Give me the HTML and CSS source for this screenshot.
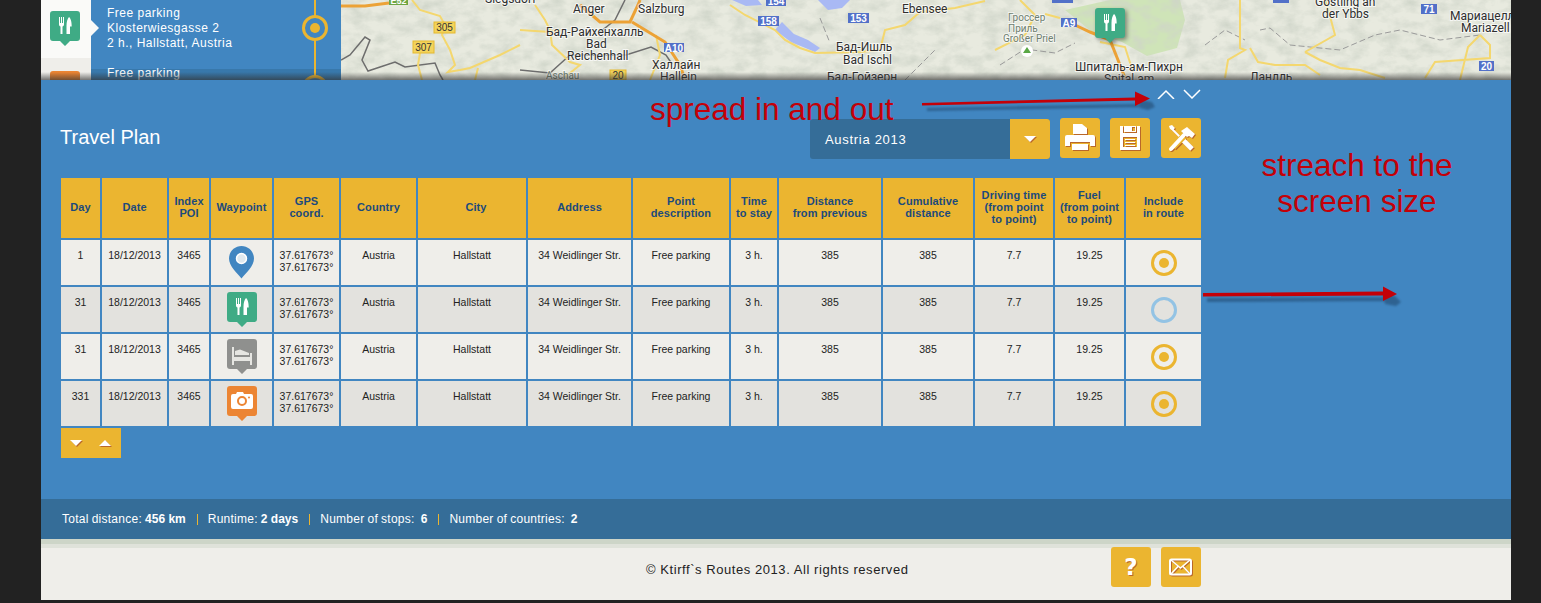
FILE: index.html
```html
<!DOCTYPE html>
<html>

<head>
    <meta charset="utf-8" />
    <title>Travel Plan</title>
    <link rel="stylesheet" href="styles.css">
</head>

<body>
    <svg class="defs" width="0" height="0">
        <defs>
            <filter id="terrain" x="0" y="0" width="100%" height="100%">
                <feTurbulence type="fractalNoise" baseFrequency="0.06 0.09" numOctaves="5" seed="11" />
                <feColorMatrix type="matrix" values="0 0 0 0 0.62  0 0 0 0 0.66  0 0 0 0 0.58  1.7 0 0 0 -0.62" />
            </filter>
            <symbol id="pin-body" viewBox="0 0 30 35">
                <path d="M3 0h24a3 3 0 0 1 3 3v24a3 3 0 0 1-3 3h-7l-5 5-5-5H3a3 3 0 0 1-3-3V3a3 3 0 0 1 3-3z" />
            </symbol>
            <symbol id="i-food" viewBox="0 0 30 35">
                <path fill="#fff" d="M9 6h1v6h1V6h1v6h1V6h1v7.5c0 1-.7 1.7-1.5 1.9V23h-2v-7.6C9.7 15.2 9 14.5 9 13.5z" />
                <path fill="#fff" d="M19 6c1.6 1 2.7 4.5 2.7 9.5H20V23h-3.5V15c0-4 1-7.5 2.5-9z" />
            </symbol>
            <symbol id="i-bed" viewBox="0 0 30 35">
                <path fill="#e6e6e2" d="M5 8h2v10h16v-4h2v12h-2v-4H7v4H5z" />
                <path fill="#e6e6e2" d="M8 12l5-1.5 9 3.5v2H8z" />
            </symbol>
            <symbol id="i-camera" viewBox="0 0 30 35">
                <path fill="#fff" fill-rule="evenodd" d="M9 8l1-2h6l1 2h7a2 2 0 0 1 2 2v11a2 2 0 0 1-2 2H6a2 2 0 0 1-2-2V10a2 2 0 0 1 2-2zM15 10a5 5 0 1 0 0 10 5 5 0 0 0 0-10zM15 12a3 3 0 1 1 0 6 3 3 0 0 1 0-6zM22 10.5a1 1 0 1 0 0 2 1 1 0 0 0 0-2z" />
            </symbol>
        </defs>
    </svg>

    <section class="page">
        <section class="top">
            <aside class="stops">
                <div class="stop stop-active">
                    <div class="stop-icon">
                        <svg class="pin pin-green"><use href="#pin-body" /></svg>
                        <svg class="pin pin-glyph"><use href="#i-food" /></svg>
                    </div>
                    <div class="stop-text">
                        Free parking<br />Klosterwiesgasse 2<br />2 h., Hallstatt, Austria
                    </div>
                    <div class="stop-mark"><span class="ring"><span class="dot"></span></span></div>
                </div>
                <div class="stop">
                    <div class="stop-icon">
                        <svg class="pin pin-orange"><use href="#pin-body" /></svg>
                    </div>
                    <div class="stop-text">Free parking</div>
                    <div class="stop-mark"><span class="ring"><span class="dot"></span></span></div>
                </div>
            </aside>

            <svg class="map" viewBox="341 0 1170 80" preserveAspectRatio="none">
                <rect x="341" y="0" width="1170" height="80" fill="#e8eadf" />
                <path d="M1065 10 1110 0h70l5 20-8 28-30 8-25-14-30-10z" fill="#cfe4b8" />
                <rect x="341" y="0" width="1170" height="80" filter="url(#terrain)" />
                <path class="lake" d="M732 0l14 6 16-1-4-5zM818 0l10 10 14-2 8-8zM775 30l16 12 24 10 5-4-12-8-14-6-12-12z" />
                <g class="border">
                    <path d="M341 60l9-5 15-18 5 3-8 20 6 11 27-9 10 5 30-4 5 12 3 5" />
                    <path d="M520 70l30 3 20-18h56l25-8 15 8 6 9" />
                    <path d="M600 32l15-12 10-20" />
                </g>
                <g class="border-dash">
                    <path d="M820 18l10 25M905 80l30-30M1000 65l25-16 30 4 20-10" />
                    <path d="M1260 30l10-2 20 17 50 5 35-15 25-5 40 10 40-5" />
                    <path d="M1205 45l20-15 20 10" />
                </g>
                <g class="road">
                    <path d="M412 0l8 10 20 6 5 9-3 10 8 15 5 15-7 7 12-2 10-2 30-13 20-10" />
                    <path d="M420 53l-2 12 4 15M475 80l3-12M520 30l30 2 10-2M535 5l10 15 5 10 2 15 18 17 10 3-15 12" />
                    <path d="M656 35l4 20-6 15-4 10M730 5l15 10 30 15 10 10 15 8 15 5 45-1 20-2 5-20 20-5 15-13 35-4 30-7" />
                    <path d="M1240 0v48l5 2-17 10-3 18M1250 48l8 14 17 3h30l15 10M1305 52l30-17-4-15-6-20" />
                    <path d="M1305 52l15 8 20 8 20 2 25 8M1480 35l10 10v13l-55 4-10 16M1480 35l-12 12-8 33M1100 42l25 5 8 25" />
                    <path d="M1045 14l15 4M1020 0l15 15-10 20-30 15" />
                </g>
                <g class="motorway">
                    <path d="M341 6h24l24-3M580 5l20 17h30l8-17 2-5M632 22l33 20 15 23 5 15" />
                    <path d="M1075 25l15 7 20 8 8 20 7 18" />
                </g>

                <g class="badge-y">
                    <rect x="434" y="22" width="21" height="11" /><text x="444.5" y="31">305</text>
                    <rect x="413" y="41" width="21" height="12" /><text x="423.5" y="51">307</text>
                    <rect x="610" y="70" width="16" height="10" /><text x="618" y="79">20</text>
                </g>
                <g class="badge-b">
                    <rect x="766" y="-4" width="20" height="10" /><text x="776" y="5">154</text>
                    <rect x="758" y="16" width="21" height="10" /><text x="768.5" y="25">158</text>
                    <rect x="848" y="13" width="21" height="10" /><text x="858.5" y="22">153</text>
                    <rect x="664" y="43" width="20" height="9" /><text x="674" y="51.5">A10</text>
                    <rect x="1061" y="18" width="16" height="9" /><text x="1069" y="26.5">A9</text>
                    <rect x="1421" y="4" width="16" height="10" /><text x="1429" y="13">71</text>
                    <rect x="1479" y="61" width="15" height="10" /><text x="1486.5" y="70">20</text>
                    <rect x="1052" y="-5" width="21" height="8" />
                    <rect x="1273" y="-5" width="16" height="8" />
                </g>
                <rect class="badge-g" x="389" y="-4" width="19" height="9" />
                <text class="badge-g-text" x="398.5" y="4">E52</text>

                <g class="label">
                    <text x="485" y="3">Siegsdorf</text>
                    <text x="573" y="13">Anger</text>
                    <text x="638" y="13">Salzburg</text>
                    <text x="902" y="13">Ebensee</text>
                    <text x="546" y="36">Бад-Райхенхалль</text>
                    <text x="586" y="48">Bad</text>
                    <text x="567" y="60">Reichenhall</text>
                    <text x="652" y="69">Халлайн</text>
                    <text x="660" y="81">Hallein</text>
                    <text x="836" y="51">Бад-Ишль</text>
                    <text x="843" y="64">Bad Ischl</text>
                    <text x="827" y="81">Бад-Гойзерн</text>
                    <text x="1075" y="71">Шпиталь-ам-Пихрн</text>
                    <text x="1104" y="83">Spital am</text>
                    <text x="1315" y="6">Gostling an</text>
                    <text x="1322" y="18">der Ybbs</text>
                    <text x="1450" y="20">Мариацелль</text>
                    <text x="1461" y="32">Mariazell</text>
                    <text x="1250" y="81">Ланлль</text>
                </g>
                <g class="label-small">
                    <text x="546" y="79">Aschau</text>
                    <text x="1008" y="21">Гроссер</text>
                    <text x="1008" y="32">Приль</text>
                    <text x="1003" y="42">Großer Priel</text>
                </g>
                <circle cx="1027" cy="51" r="6" fill="#fff" />
                <path d="M1027 47l4 6h-8z" fill="#5aa845" />

                <svg class="map-pin" x="1095" y="8" width="30" height="35"><use href="#pin-body" /></svg>
                <svg x="1095" y="8" width="30" height="35"><use href="#i-food" /></svg>
            </svg>
            <div class="top-fade"></div>
        </section>

        <section class="panel">
            <div class="spread">
                <svg class="chevron" viewBox="0 0 18 10"><path d="M1 10l8-8 8 8" /></svg>
                <svg class="chevron" viewBox="0 0 18 10"><path d="M1 1l8 8 8-8" /></svg>
            </div>
            <div class="toolbar">
                <h1>Travel Plan</h1>
                <div class="picker">
                    <span class="picker-value">Austria 2013</span>
                    <span class="picker-btn"><span class="tri-down"></span></span>
                </div>
                <button class="tool">
                    <svg viewBox="0 0 40 40">
                        <path fill="#fff" d="M13 6h9l5 4v6H13z" />
                        <path fill="#fff" d="M7 17h26a2 2 0 0 1 2 2v9h-5v-4H10v4H5v-9a2 2 0 0 1 2-2z" />
                        <path fill="#fff" d="M12 26h16v6H12z" />
                    </svg>
                </button>
                <button class="tool">
                    <svg viewBox="0 0 40 40">
                        <path fill="#fff" fill-rule="evenodd" d="M10 8h3v7h14V8h3v24H10zM14 8h12v6H14zM22 9v4h3V9zM13 19v10h14V19z" />
                        <path fill="#fff" d="M15 21h10v1H15zM15 24h10v1H15zM15 27h10v1H15z" />
                    </svg>
                </button>
                <button class="tool">
                    <svg viewBox="0 0 40 40">
                        <path fill="none" stroke="#fff" stroke-width="2" d="M10 10l12 12" />
                        <path fill="#fff" d="M8 8l3-1 3 3-2 2-3-1z" />
                        <path fill="none" stroke="#fff" stroke-width="5" d="M22 22l9 9" />
                        <path fill="none" stroke="#ebb530" stroke-width="6.5" d="M12 29l11-11" />
                        <path fill="none" stroke="#fff" stroke-width="4" stroke-linecap="round" d="M10 31l13-14" />
                        <path fill="#fff" d="M20 13l6-4 8 7-3 4-3-2-2 1z" />
                    </svg>
                </button>
            </div>

            <table class="plan">
                <colgroup>
                    <col class="c1"><col class="c2"><col class="c3"><col class="c4"><col class="c5">
                    <col class="c6"><col class="c7"><col class="c8"><col class="c9"><col class="c10">
                    <col class="c11"><col class="c12"><col class="c13"><col class="c14"><col class="c15">
                </colgroup>
                <thead>
                    <tr>
                        <th>Day</th><th>Date</th><th>Index<br />POI</th><th>Waypoint</th><th>GPS<br />coord.</th>
                        <th>Country</th><th class="th-city">City</th><th>Address</th><th>Point<br />description</th><th>Time<br />to stay</th>
                        <th>Distance<br />from previous</th><th>Cumulative<br />distance</th>
                        <th>Driving time<br />(from point<br />to point)</th><th>Fuel<br />(from point<br />to point)</th>
                        <th>Include<br />in route</th>
                    </tr>
                </thead>
                <tbody>
                    <tr>
                        <td>1</td><td>18/12/2013</td><td>3465</td>
                        <td class="way">
                            <svg class="map-marker" viewBox="0 0 25 33">
                                <path d="M12.5 0C5.6 0 0 5.6 0 12.5 0 20 8 27 12.5 32.5 17 27 25 20 25 12.5 25 5.6 19.4 0 12.5 0z" />
                                <circle cx="12.5" cy="12.5" r="5" fill="#dfe9ef" stroke="#fff" stroke-width="1.5" />
                            </svg>
                        </td>
                        <td>37.617673°<br />37.617673°</td><td>Austria</td><td>Hallstatt</td><td>34 Weidlinger Str.</td>
                        <td>Free parking</td><td>3 h.</td><td>385</td><td>385</td><td>7.7</td><td>19.25</td>
                        <td class="inc"><span class="ring"><span class="dot"></span></span></td>
                    </tr>
                    <tr>
                        <td>31</td><td>18/12/2013</td><td>3465</td>
                        <td class="way">
                            <span class="way-pin">
                                <svg class="pin pin-green"><use href="#pin-body" /></svg>
                                <svg class="pin pin-glyph"><use href="#i-food" /></svg>
                            </span>
                        </td>
                        <td>37.617673°<br />37.617673°</td><td>Austria</td><td>Hallstatt</td><td>34 Weidlinger Str.</td>
                        <td>Free parking</td><td>3 h.</td><td>385</td><td>385</td><td>7.7</td><td>19.25</td>
                        <td class="inc"><span class="ring ring-off"></span></td>
                    </tr>
                    <tr>
                        <td>31</td><td>18/12/2013</td><td>3465</td>
                        <td class="way">
                            <span class="way-pin">
                                <svg class="pin pin-grey"><use href="#pin-body" /></svg>
                                <svg class="pin pin-glyph"><use href="#i-bed" /></svg>
                            </span>
                        </td>
                        <td>37.617673°<br />37.617673°</td><td>Austria</td><td>Hallstatt</td><td>34 Weidlinger Str.</td>
                        <td>Free parking</td><td>3 h.</td><td>385</td><td>385</td><td>7.7</td><td>19.25</td>
                        <td class="inc"><span class="ring"><span class="dot"></span></span></td>
                    </tr>
                    <tr>
                        <td>331</td><td>18/12/2013</td><td>3465</td>
                        <td class="way">
                            <span class="way-pin">
                                <svg class="pin pin-orange"><use href="#pin-body" /></svg>
                                <svg class="pin pin-glyph"><use href="#i-camera" /></svg>
                            </span>
                        </td>
                        <td>37.617673°<br />37.617673°</td><td>Austria</td><td>Hallstatt</td><td>34 Weidlinger Str.</td>
                        <td>Free parking</td><td>3 h.</td><td>385</td><td>385</td><td>7.7</td><td>19.25</td>
                        <td class="inc"><span class="ring"><span class="dot"></span></span></td>
                    </tr>
                </tbody>
            </table>

            <div class="sorter">
                <span class="tri-down"></span>
                <span class="tri-up"></span>
            </div>

            <!-- annotations drawn on top of the screen -->
            <div class="note note-spread">spread in and out</div>
            <div class="note note-stretch">streach to the<br />screen size</div>
            <svg class="arrows" viewBox="0 0 1470 420">
                <path class="arrow-shadow" d="M886 28l210-4 3 3-213 4zM1096 19l15 3 3 5-7 3-8-2zM1166 218l185-1 4 4-189 1zM1342 214l12 2 6 6-5 4-11-2z" />
                <path class="arrow-line" d="M881 23l213-5.5v-6l15 7-15 7.5v-5.5l-213 5zM1162 213l180-1.5v-5l14 7.5-14 7v-5.5l-180 1z" />
            </svg>
        </section>

        <section class="totals">
            <span>Total distance: <b>456 km</b></span><i></i>
            <span>Runtime: <b>2 days</b></span><i></i>
            <span>Number of stops: <b class="wide">6</b></span><i></i>
            <span>Number of countries: <b class="wide">2</b></span>
        </section>

        <footer class="foot">
            <div class="copy">© Ktirff`s Routes 2013. All rights reserved</div>
            <div class="foot-btns">
                <button class="tool tool-help">?</button>
                <button class="tool">
                    <svg viewBox="0 0 40 40">
                        <rect x="9" y="12.5" width="21" height="15" rx="1.5" fill="none" stroke="#fff" stroke-width="2" />
                        <path d="M10 13l9.5 8 9.5-8M10 27l7-7.5M29 27l-7-7.5" fill="none" stroke="#fff" stroke-width="1.5" />
                    </svg>
                </button>
            </div>
        </footer>
    </section>
</body>

</html>
```

FILE: styles.css
```css
* {
    padding: 0;
    margin: 0;
    box-sizing: border-box;
}

body {
    background-color: #222222;
    font-family: "Liberation Sans", Arial, sans-serif;
    overflow: hidden;
}

.defs {
    position: absolute;
}

.page {
    width: 1470px;
    height: 600px;
    margin-left: 41px;
    background-color: #efeeea;
    display: flex;
    flex-direction: column;
}

/* top strip: stop list and map */
.top {
    position: relative;
    display: flex;
    height: 80px;
    overflow: hidden;
    flex-shrink: 0;
}

.stops {
    position: relative;
    width: 300px;
    flex-shrink: 0;
    background: linear-gradient(#4186c1, #4186c1) no-repeat 0 0 / 100% 69px, #3878ab;
}

.stop {
    display: flex;
    height: 60px;
}

.stop-icon {
    position: relative;
    width: 50px;
    height: 60px;
    padding: 13px 0 0 9px;
    background-color: #efeeea;
    margin-top: -2px;
}

.stop-active .stop-icon {
    background-color: #fafaf8;
}

.stop-active .stop-icon::after {
    content: "";
    position: absolute;
    left: 50px;
    top: 22px;
    border-left: 8px solid #fafaf8;
    border-top: 8px solid transparent;
    border-bottom: 8px solid transparent;
}

.stop-text {
    width: 208px;
    padding: 6px 0 0 16px;
    color: #ffffff;
    font-size: 12px;
    line-height: 15px;
    letter-spacing: 0.5px;
}

.stop-mark {
    width: 28px;
    margin-left: 2px;
    padding: 15px 0 0 1px;
    flex-shrink: 0;
    background: linear-gradient(#ebb530, #ebb530) no-repeat 13px 0 / 2px 100%;
}

.map {
    display: block;
    width: 1170px;
    height: 80px;
}

.lake {
    fill: #a9b9f4;
}

.border path {
    fill: none;
    stroke: #6d6d6d;
    stroke-width: 1.5;
}

.border-dash path {
    fill: none;
    stroke: #9a9a9a;
    stroke-width: 1;
    stroke-dasharray: 6 3;
}

.road path {
    fill: none;
    stroke: #f4d76e;
    stroke-width: 2;
}

.motorway path {
    fill: none;
    stroke: #eca236;
    stroke-width: 3;
}

.badge-y rect {
    fill: #f2d35c;
    stroke: #e6b92e;
}

.badge-y text {
    font: 10px "Liberation Sans", sans-serif;
    fill: #333333;
    text-anchor: middle;
}

.badge-b rect {
    fill: #5270c8;
}

.badge-b text {
    font: bold 10px "Liberation Sans", sans-serif;
    fill: #ffffff;
    text-anchor: middle;
}

.badge-g {
    fill: #6ea544;
}

.badge-g-text {
    font: bold 9px "Liberation Sans", sans-serif;
    fill: #ffffff;
    text-anchor: middle;
}

.label text {
    font: 12px Roboto, sans-serif;
    fill: #2e2e2e;
    stroke: rgba(255, 255, 255, 0.7);
    stroke-width: 2px;
    paint-order: stroke;
}

.label-small text {
    font: 10px Roboto, sans-serif;
    fill: #6f7f70;
    stroke: rgba(255, 255, 255, 0.6);
    stroke-width: 2px;
    paint-order: stroke;
}

.map-pin {
    fill: #3fab85;
    filter: drop-shadow(2px 2px 2px rgba(0, 0, 0, 0.4));
}

.top-fade {
    position: absolute;
    left: 0;
    right: 0;
    bottom: 0;
    height: 8px;
    background: linear-gradient(rgba(50, 50, 50, 0), rgba(50, 50, 50, 0.65));
}

/* pins */
.pin {
    display: block;
    width: 30px;
    height: 35px;
}

.pin-glyph {
    position: absolute;
    left: 9px;
    top: 13px;
}

.pin-green {
    fill: #3fab85;
}

.pin-orange {
    fill: #ec8533;
}

.pin-grey {
    fill: #8f908e;
}

.way-pin .pin-glyph {
    left: 0;
    top: 0;
}

.way-pin {
    position: relative;
    display: block;
    width: 30px;
    height: 35px;
    margin: 5px auto 0;
}

.map-marker {
    display: block;
    width: 25px;
    height: 33px;
    margin: 6px auto 0;
    fill: #4186c1;
}

/* ring used in timeline and table */
.ring {
    display: flex;
    align-items: center;
    justify-content: center;
    width: 26px;
    height: 26px;
    border: 3px solid #ebb530;
    border-radius: 50%;
}

.stop-mark .ring {
    background-color: #4186c1;
}

.ring-off {
    border-color: #93c3e4;
}

.dot {
    display: block;
    width: 10px;
    height: 10px;
    border-radius: 50%;
    background-color: #ebb530;
}

/* main blue panel */
.panel {
    position: relative;
    height: 419px;
    flex-shrink: 0;
    padding: 9px 0 0 20px;
    background-color: #4186c1;
}

.spread {
    display: flex;
    justify-content: flex-end;
    gap: 8px;
    width: 1140px;
    height: 10px;
}

.chevron {
    display: block;
    width: 18px;
    height: 10px;
}

.chevron path {
    fill: none;
    stroke: #ffffff;
    stroke-width: 1.5;
}

.toolbar {
    display: flex;
    align-items: center;
    width: 1140px;
    height: 40px;
    margin-top: 19px;
    gap: 10px;
}

.toolbar h1 {
    flex-grow: 1;
    margin: -2px 0 0 -1px;
    color: #ffffff;
    font-size: 20px;
    font-weight: normal;
}

.picker {
    display: flex;
    width: 240px;
    height: 40px;
    margin-top: 2px;
    border-radius: 3px;
    overflow: hidden;
    background-color: #356d98;
}

.picker-value {
    flex-grow: 1;
    padding-left: 15px;
    color: #ffffff;
    font-size: 13px;
    line-height: 41px;
    letter-spacing: 0.7px;
}

.picker-btn {
    display: flex;
    align-items: center;
    justify-content: center;
    width: 40px;
    background-color: #ebb530;
}

.tri-down,
.tri-up {
    display: block;
    width: 0;
    height: 0;
    border-left: 6.5px solid transparent;
    border-right: 6.5px solid transparent;
    filter: drop-shadow(1px 1px 0 #b9672a);
}

.tri-down {
    border-top: 6px solid #ffffff;
}

.tri-up {
    border-bottom: 6px solid #ffffff;
}

.tool {
    display: flex;
    align-items: center;
    justify-content: center;
    width: 40px;
    height: 40px;
    border: none;
    border-radius: 3px;
    background-color: #ebb530;
    flex-shrink: 0;
}

.tool svg {
    display: block;
    width: 40px;
    height: 40px;
    filter: drop-shadow(1px 1px 0 #b9672a);
}

.toolbar .tool:last-child {
    margin-left: 1px;
}

.tool-help {
    color: #ffffff;
    font-size: 23px;
    font-weight: bold;
    font-family: "DejaVu Sans", sans-serif;
    text-shadow: 1px 1px 0 #b9672a;
}

/* table */
.plan {
    width: 1144px;
    margin: 18px 0 0 -2px;
    table-layout: fixed;
    border-collapse: separate;
    border-spacing: 2px;
}

.c1 { width: 39px; }
.c2 { width: 65px; }
.c3 { width: 40px; }
.c4 { width: 61px; }
.c5 { width: 65px; }
.c6 { width: 75px; }
.c7 { width: 108px; }
.c8 { width: 103px; }
.c9 { width: 96px; }
.c10 { width: 46px; }
.c11 { width: 102px; }
.c12 { width: 90px; }
.c13 { width: 78px; }
.c14 { width: 69px; }
.c15 { width: 75px; }

.plan th {
    height: 60px;
    padding: 0 0 2px;
    background-color: #ebb530;
    color: #1c4a7c;
    font-size: 11px;
    line-height: 12px;
    letter-spacing: 0.1px;
    text-align: center;
    vertical-align: middle;
}

.plan .th-city {
    padding-left: 8px;
}

.plan td {
    height: 45px;
    padding: 9px 0 0;
    background-color: #efeeea;
    color: #222222;
    font-size: 10.5px;
    line-height: 12px;
    text-align: center;
    vertical-align: top;
}

.plan tbody tr:nth-child(even) td {
    background-color: #e3e2de;
}

.plan td.way {
    padding: 0;
}

.plan td.inc {
    padding-top: 10px;
}

.inc .ring {
    margin: 0 auto;
}

.sorter {
    display: flex;
    align-items: center;
    gap: 17px;
    width: 60px;
    height: 30px;
    padding-left: 9px;
    background-color: #ebb530;
}

/* red notes over the page */
.note {
    position: absolute;
    color: #c40008;
    font-size: 31.5px;
    line-height: 36px;
}

.note-spread {
    left: 609px;
    top: 11px;
}

.note-stretch {
    left: 1190px;
    top: 67px;
    width: 252px;
    text-align: center;
}

.arrows {
    position: absolute;
    left: 0;
    top: 0;
    width: 1470px;
    height: 420px;
    pointer-events: none;
}

.arrow-shadow {
    fill: #2a5a86;
    opacity: 0.8;
    filter: blur(0.8px);
}

.arrow-line {
    fill: #c40008;
}

/* totals bar */
.totals {
    display: flex;
    align-items: center;
    height: 40px;
    padding-left: 21px;
    background-color: #356d98;
    color: #ffffff;
    font-size: 12px;
    letter-spacing: 0.25px;
    word-spacing: -0.5px;
}

.totals b {
    letter-spacing: 0;
    word-spacing: 0;
}

.totals b.wide {
    margin-left: 3px;
}

.totals i {
    display: block;
    width: 1px;
    height: 11px;
    margin: 0 10px 0 11px;
    background-color: #ebb530;
}

/* footer */
.foot {
    position: relative;
    flex-grow: 1;
    display: flex;
    justify-content: flex-end;
    padding: 3px 310px 0 0;
    border-top: 5px solid #cdd5c8;
    background: linear-gradient(#dfe2da, #dfe2da) no-repeat 0 0 / 100% 4px, #efeeea;
}

.copy {
    position: absolute;
    left: 605px;
    top: 18px;
    color: #222222;
    font-size: 13px;
    letter-spacing: 0.56px;
}

.foot-btns {
    display: flex;
    gap: 10px;
    height: 40px;
}
```
